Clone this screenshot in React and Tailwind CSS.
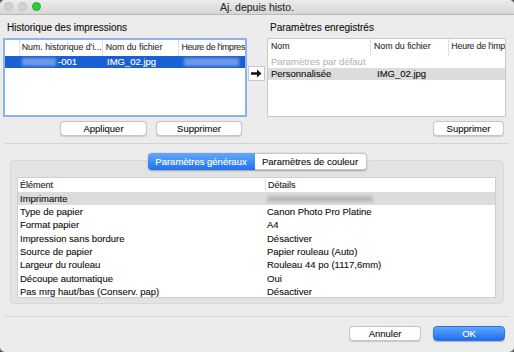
import React from "react";

const F = { fontFamily: '"Liberation Sans", Arial, sans-serif' };

function Btn({ children, w, primary }) {
  return (
    <div
      className={
        "h-[15px] flex items-center justify-center rounded-[4px] text-[9.5px] leading-none " +
        w +
        (primary
          ? " bg-gradient-to-b from-[#5fa6fa] to-[#1b6ef2] text-white border border-[#2b73e6] shadow-[0_0.5px_1px_rgba(0,0,0,0.25)]"
          : " bg-white text-[#111] border border-[#c6c6c6] shadow-[0_0.5px_1px_rgba(0,0,0,0.15)]")
      }
    >
      {children}
    </div>
  );
}

export default function App() {
  const details = [
    ["Imprimante", null],
    ["Type de papier", "Canon Photo Pro Platine"],
    ["Format papier", "A4"],
    ["Impression sans bordure", "Désactiver"],
    ["Source de papier", "Papier rouleau (Auto)"],
    ["Largeur du rouleau", "Rouleau 44 po (1117,6mm)"],
    ["Découpe automatique", "Oui"],
    ["Pas mrg haut/bas (Conserv. pap)", "Désactiver"],
  ];
  return (
    <div style={F} className="w-[514px] h-[352px] bg-[#5a5a5a] [-webkit-text-stroke:0.12px]">
      <div className="w-[514px] h-[352px] bg-[#ececec] rounded-[5px] overflow-hidden flex flex-col">
        {/* title bar */}
        <div className="h-[15px] shrink-0 relative flex items-center justify-center bg-gradient-to-b from-[#ececec] to-[#d6d6d6] border-b border-[#b9b9b9]">
          <div className="absolute left-[4px] top-[2px] flex gap-[5px]">
            <div className="w-[9px] h-[9px] rounded-full bg-[#d3d3d3] border border-[#c0c0c0]" />
            <div className="w-[9px] h-[9px] rounded-full bg-[#d3d3d3] border border-[#c0c0c0]" />
            <div className="w-[9px] h-[9px] rounded-full bg-[#2ecb40] border border-[#1fae2d]" />
          </div>
          <span className="text-[10.5px] text-[#2a2a2a] leading-none">Aj. depuis histo.</span>
        </div>

        {/* top section */}
        <div className="flex pl-[3px] pt-[6px]">
          {/* left panel */}
          <div className="w-[244px] flex flex-col">
            <div className="h-[13px] leading-[13px] text-[10px] text-[#111] pl-[4px]">Historique des impressions</div>
            <div className="mt-[4px] h-[79px] bg-white border-[2px] border-[#8bb3ef] overflow-hidden">
              <div className="h-[16px] flex text-[8.8px] text-[#333] leading-[14px]">
                <div className="w-[15px] border-r border-[#e0e0e0]" />
                <div className="w-[83px] pl-[2px] border-r border-[#e0e0e0] whitespace-nowrap">Num. historique d'i...</div>
                <div className="w-[78px] pl-[3px] border-r border-[#e0e0e0] whitespace-nowrap">Nom du fichier</div>
                <div className="flex-1 pl-[2px] whitespace-nowrap tracking-[-0.3px]">Heure de l'impres</div>
              </div>
              <div className="h-[12px] bg-[#1a5fd4] flex items-center text-[9.5px] text-white leading-none">
                <div className="w-[15px]" />
                <div className="w-[83px] flex items-center pl-[2px]">
                  <div className="w-[34px] h-[8px] bg-[#6e9ae6] blur-[1.5px]" />
                  <span className="ml-[2px]">-001</span>
                </div>
                <div className="w-[78px] pl-[4px]">IMG_02.jpg</div>
                <div className="flex-1 pl-[3px]">
                  <div className="w-[55px] h-[8px] bg-[#6e9ae6] blur-[1.5px]" />
                </div>
              </div>
            </div>
            <div className="mt-[4px] flex justify-end gap-[9px] pr-[5px]">
              <Btn w="w-[87px]">Appliquer</Btn>
              <Btn w="w-[86px]">Supprimer</Btn>
            </div>
          </div>

          {/* arrow */}
          <div className="w-[20px] pl-[1px] pt-[45px]">
            <div className="w-[17px] h-[15px] bg-white border border-[#c8c8c8] flex items-center justify-center">
              <svg width="11" height="9" viewBox="0 0 11 9">
                <path d="M0 3.2H6V0.5L10.5 4.5L6 8.5V5.8H0Z" fill="#111" />
              </svg>
            </div>
          </div>

          {/* right panel */}
          <div className="w-[239px] flex flex-col">
            <div className="h-[13px] leading-[13px] text-[10px] text-[#111] pl-[3px]">Paramètres enregistrés</div>
            <div className="mt-[4px] h-[79px] bg-white border border-[#c9c9c9] overflow-hidden">
              <div className="h-[17px] flex text-[8.8px] text-[#333] leading-[15px]">
                <div className="w-[105px] pl-[3px] border-r border-[#e0e0e0]">Nom</div>
                <div className="w-[80px] pl-[3px] border-r border-[#e0e0e0] whitespace-nowrap">Nom du fichier</div>
                <div className="flex-1 pl-[2px] whitespace-nowrap tracking-[-0.2px]">Heure de l'imp</div>
              </div>
              <div className="h-[12px] flex items-center text-[9.5px] text-[#b0b0b0] leading-none pl-[3px] [-webkit-text-stroke:0px]">Paramètres par défaut</div>
              <div className="h-[12px] flex items-center bg-[#dcdcdc] text-[9.5px] text-[#111] leading-none">
                <div className="w-[105px] pl-[3px]">Personnalisée</div>
                <div className="w-[80px] pl-[4px]">IMG_02.jpg</div>
              </div>
            </div>
            <div className="mt-[4px] flex justify-end pr-[2px]">
              <Btn w="w-[71px]">Supprimer</Btn>
            </div>
          </div>
        </div>

        {/* separator */}
        <div className="mx-[5px] mt-[7px] h-px bg-[#d4d4d4]" />

        {/* tabs + group */}
        <div className="mt-[9px] flex justify-center relative z-10">
          <div className="h-[17px] flex rounded-[4px] shadow-[0_0.5px_1.5px_rgba(0,0,0,0.3)] overflow-hidden text-[9.5px] leading-none">
            <div className="w-[107px] flex items-center justify-center bg-gradient-to-b from-[#64a8fa] to-[#1d70f0] text-white">Paramètres généraux</div>
            <div className="w-[112px] flex items-center justify-center bg-white text-[#111] border border-l-0 border-[#c6c6c6] rounded-r-[4px]">Paramètres de couleur</div>
          </div>
        </div>
        <div className="mx-[10px] -mt-[10px] h-[144px] bg-[#e3e3e3] border border-[#d7d7d7] rounded-[4px] pt-[16px] pl-[6px] pr-[7px]">
          <div className="h-[121px] bg-white border border-[#cfcfcf] overflow-hidden">
            <div className="h-[14px] flex items-center text-[9px] text-[#222] leading-none">
              <div className="w-[247px] pl-[2px]">Élément</div>
              <div className="h-[12px] w-px bg-[#e0e0e0]" />
              <div className="pl-[2px]">Détails</div>
            </div>
            {details.map(([k, v], i) => (
              <div
                key={k}
                className={
                  "h-[13.3px] flex items-center text-[9.5px] text-[#111] leading-none " +
                  (i === 0 ? "bg-[#dcdcdc]" : "")
                }
              >
                <div className="w-[248px] pl-[2px] whitespace-nowrap">{k}</div>
                <div className="pl-[1px] whitespace-nowrap">
                  {v === null ? <div className="w-[106px] h-[6px] bg-[#b9b9b9] blur-[1.5px]" /> : v}
                </div>
              </div>
            ))}
          </div>
        </div>

        {/* separator */}
        <div className="mx-[5px] mt-[12px] h-px bg-[#d4d4d4]" />

        <div className="mt-[9px] flex justify-end gap-[12px] pr-[9px]">
          <Btn w="w-[72px]">Annuler</Btn>
          <Btn w="w-[72px]" primary>OK</Btn>
        </div>
      </div>
    </div>
  );
}
